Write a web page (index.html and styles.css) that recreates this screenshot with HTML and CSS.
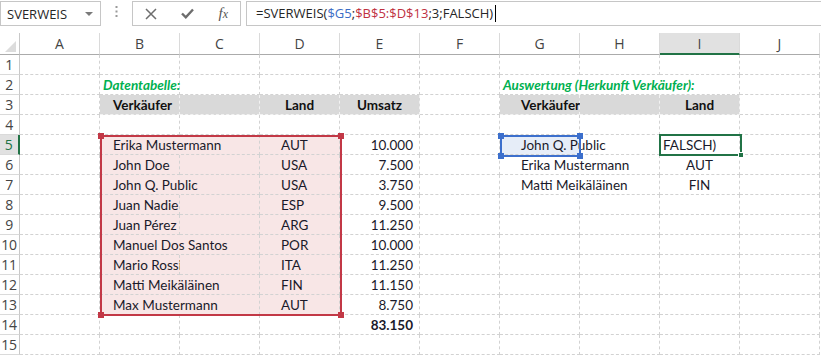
FILE: index.html
```html
<!DOCTYPE html>
<html lang="de">
<head>
<meta charset="utf-8">
<title>SVERWEIS</title>
<link rel="stylesheet" href="styles.css">
</head>
<body>
<div class="app">
  <div class="fbar">
    <div class="namebox"><span>SVERWEIS</span><span class="dd"></span></div>
    <div class="vdots"><svg width="3" height="11" viewBox="0 0 3 11"><rect x="0.5" y="0" width="2" height="2" fill="#9a9a9a"/><rect x="0.5" y="4.5" width="2" height="2" fill="#9a9a9a"/><rect x="0.5" y="9" width="2" height="2" fill="#9a9a9a"/></svg></div>
    <div class="fxbox">
      <svg class="ic" width="12" height="12" viewBox="0 0 12 12"><path d="M1 1L11 11M11 1L1 11" stroke="#6d6d6d" stroke-width="1.5" fill="none"/></svg>
      <svg class="ic" width="13" height="11" viewBox="0 0 13 11"><path d="M1 5.5L4.8 9.3L12 1.5" stroke="#6d6d6d" stroke-width="2.4" fill="none"/></svg>
      <span class="fx">f<span class="fxx">x</span></span>
    </div>
    <div class="finput">=SVERWEIS(<span class="rb">$G5</span>;<span class="rr">$B$5:$D$13</span>;3;FALSCH)<span class="caret"></span></div>
  </div>

  <div class="sheet">
    <div class="hrow">
      <div class="corner"><span class="tri"></span></div>
      <div class="ch">A</div><div class="ch">B</div><div class="ch">C</div><div class="ch">D</div><div class="ch">E</div>
      <div class="ch">F</div><div class="ch">G</div><div class="ch">H</div><div class="ch act">I</div><div class="ch">J</div>
    </div>

    <div class="r"><div class="rh">1</div><div class="c"></div><div class="c"></div><div class="c"></div><div class="c"></div><div class="c"></div><div class="c"></div><div class="c"></div><div class="c"></div><div class="c"></div><div class="c"></div></div>

    <div class="r"><div class="rh">2</div><div class="c"></div><div class="c title">Datentabelle:</div><div class="c"></div><div class="c"></div><div class="c"></div><div class="c"></div><div class="c w3 title">Auswertung (Herkunft Verkäufer):</div><div class="c"></div></div>

    <div class="r"><div class="rh">3</div><div class="c"></div><div class="c gray hd ind">Verkäufer</div><div class="c gray"></div><div class="c gray hd ctr">Land</div><div class="c gray hd ctr">Umsatz</div><div class="c"></div><div class="c gray hd ind2">Verkäufer</div><div class="c gray"></div><div class="c gray hd ctr">Land</div><div class="c"></div></div>

    <div class="r"><div class="rh">4</div><div class="c"></div><div class="c"></div><div class="c"></div><div class="c"></div><div class="c"></div><div class="c"></div><div class="c"></div><div class="c"></div><div class="c"></div><div class="c"></div></div>

    <div class="r"><div class="rh act">5</div><div class="c"></div><div class="c w2 pink ind">Erika Mustermann</div><div class="c pink ind2">AUT</div><div class="c num">10.000</div><div class="c"></div><div class="c sel ind2 nr">John Q. Public</div><div class="c"></div><div class="c edit">FALSCH)</div><div class="c"></div></div>

    <div class="r"><div class="rh">6</div><div class="c"></div><div class="c pink ind">John Doe</div><div class="c pink"></div><div class="c pink ind2">USA</div><div class="c num">7.500</div><div class="c"></div><div class="c w2 ind2">Erika Mustermann</div><div class="c ctr">AUT</div><div class="c"></div></div>

    <div class="r"><div class="rh">7</div><div class="c"></div><div class="c w2 pink ind">John Q. Public</div><div class="c pink ind2">USA</div><div class="c num">3.750</div><div class="c"></div><div class="c w2 ind2">Matti Meikäläinen</div><div class="c ctr">FIN</div><div class="c"></div></div>

    <div class="r"><div class="rh">8</div><div class="c"></div><div class="c pink ind">Juan Nadie</div><div class="c pink"></div><div class="c pink ind2">ESP</div><div class="c num">9.500</div><div class="c"></div><div class="c"></div><div class="c"></div><div class="c"></div><div class="c"></div></div>

    <div class="r"><div class="rh">9</div><div class="c"></div><div class="c pink ind">Juan Pérez</div><div class="c pink"></div><div class="c pink ind2">ARG</div><div class="c num">11.250</div><div class="c"></div><div class="c"></div><div class="c"></div><div class="c"></div><div class="c"></div></div>

    <div class="r"><div class="rh">10</div><div class="c"></div><div class="c w2 pink ind">Manuel Dos Santos</div><div class="c pink ind2">POR</div><div class="c num">10.000</div><div class="c"></div><div class="c"></div><div class="c"></div><div class="c"></div><div class="c"></div></div>

    <div class="r"><div class="rh">11</div><div class="c"></div><div class="c pink ind">Mario Rossi</div><div class="c pink"></div><div class="c pink ind2">ITA</div><div class="c num">11.250</div><div class="c"></div><div class="c"></div><div class="c"></div><div class="c"></div><div class="c"></div></div>

    <div class="r"><div class="rh">12</div><div class="c"></div><div class="c w2 pink ind">Matti Meikäläinen</div><div class="c pink ind2">FIN</div><div class="c num">11.150</div><div class="c"></div><div class="c"></div><div class="c"></div><div class="c"></div><div class="c"></div></div>

    <div class="r"><div class="rh">13</div><div class="c"></div><div class="c w2 pink ind">Max Mustermann</div><div class="c pink ind2">AUT</div><div class="c num">8.750</div><div class="c"></div><div class="c"></div><div class="c"></div><div class="c"></div><div class="c"></div></div>

    <div class="r"><div class="rh">14</div><div class="c"></div><div class="c"></div><div class="c"></div><div class="c"></div><div class="c num bold">83.150</div><div class="c"></div><div class="c"></div><div class="c"></div><div class="c"></div><div class="c"></div></div>

    <div class="r"><div class="rh">15</div><div class="c"></div><div class="c"></div><div class="c"></div><div class="c"></div><div class="c"></div><div class="c"></div><div class="c"></div><div class="c"></div><div class="c"></div><div class="c"></div></div>

    <div class="range red"><i class="h tl"></i><i class="h tr"></i><i class="h bl"></i><i class="h br"></i></div>
    <div class="range blue"><i class="h tl"></i><i class="h tr"></i><i class="h bl"></i><i class="h br"></i></div>
    <div class="active"><i class="fill"></i></div>
  </div>
</div>
</body>
</html>
```

FILE: styles.css
```css
* { box-sizing: border-box; }
html, body { margin: 0; padding: 0; background: #fff; }
body { font-family: "Lato", "Liberation Sans", sans-serif; overflow: hidden; }

.app { width: 821px; height: 356px; overflow: hidden; }

/* formula bar */
.fbar { display: flex; align-items: flex-start; height: 33px; padding-top: 1px; }
.namebox {
  width: 101px; height: 25px; flex: none;
  border: 1px solid #c6c6c6;
  display: flex; align-items: center; justify-content: space-between;
  padding: 0 7px 0 6px;
  font: 13px "Open Sans", sans-serif; color: #262626;
}
.dd { width: 0; height: 0; border-left: 4px solid transparent; border-right: 4px solid transparent; border-top: 4px solid #7a7a7a; margin-top: 1px; }
.vdots { width: 31px; height: 25px; flex: none; display: flex; align-items: center; justify-content: center; padding-bottom: 4px; }
.fxbox {
  width: 109px; height: 25px; flex: none;
  border: 1px solid #c6c6c6;
  display: flex; align-items: center; justify-content: space-between;
  padding: 0 12px 0 12px;
}
.fx { font: italic 15px "Liberation Serif", serif; color: #555; line-height: 1; }
.fxx { font-size: 12px; }
.finput {
  flex: 1; height: 25px; margin-left: 5px;
  border: 1px solid #c6c6c6; border-right: none;
  padding-left: 9px;
  font: 13px "Open Sans", sans-serif; color: #262626;
  line-height: 23px; white-space: nowrap;
  display: flex; align-items: center;
}
.rb { color: #3b6cc6; }
.rr { color: #c0313f; }
.caret { display: inline-block; width: 1px; height: 17px; background: #000; margin-left: 2px; }

/* sheet */
.sheet { position: relative; }
.hrow { display: flex; height: 22px; }
.corner { width: 20px; flex: none; position: relative; border-right: 1px solid #c8c8c8; border-bottom: 1px solid #ababab; }
.tri { position: absolute; right: 3px; bottom: 2px; width: 0; height: 0; border-left: 11px solid transparent; border-bottom: 11px solid #dcdcdc; }
.ch {
  width: 80px; flex: none;
  border-right: 1px solid #dadada; border-bottom: 1px solid #ababab;
  text-align: center; font: 14px "Open Sans", sans-serif; color: #444;
  line-height: 21px;
}
.ch.act { background: #e1e1e1; border-bottom: 2px solid #217346; }

.r { display: flex; height: 20px; }
.rh {
  width: 20px; flex: none;
  border-right: 1px solid #c8c8c8; border-bottom: 1px solid #dadada;
  text-align: center; font: 14px "Open Sans", sans-serif; color: #444;
  line-height: 19px; padding-right: 1px; letter-spacing: -0.3px;
}
.rh.act { background: #e1e1e1; color: #217346; border-right: 2px solid #217346; }

.c {
  width: 80px; flex: none;
  border-right: 1px dashed #d2d2d2; border-bottom: 1px dashed #d2d2d2;
  font-size: 13.5px; color: #1a1a2a;
  line-height: 20px; white-space: nowrap;
  padding: 0 4px;
}
.w2 { width: 160px; }
.w3 { width: 240px; }
.nr { border-right-color: transparent; }
.ind { padding-left: 13px; }
.ind2 { padding-left: 21px; }
.ctr { text-align: center; }
.num { text-align: right; padding-right: 6px; }
.bold { font-weight: 700; }
.title { color: #00b050; font-weight: 700; font-style: italic; padding-left: 3px; }
.gray { background: #d9d9d9; border-right-color: #f2f2f2; border-bottom-color: #f2f2f2; }
.hd { font-weight: 700; color: #111; }
.pink { background: #f8e6e6; }
.sel { background: #e6edf8; }
.edit { padding-left: 3px; }

/* overlays */
.range { position: absolute; border: 2px solid; }
.range.red { left: 100px; top: 102px; width: 242px; height: 181px; border-color: #c23846; }
.range.blue { left: 500px; top: 102px; width: 81px; height: 22px; border-color: #3c6fcc; }
.h { position: absolute; width: 6px; height: 6px; }
.red .h { background: #c23846; }
.blue .h { background: #3c6fcc; }
.h.tl { left: -4px; top: -4px; }
.h.tr { right: -4px; top: -4px; }
.h.bl { left: -4px; bottom: -4px; }
.h.br { right: -4px; bottom: -4px; }
.active { position: absolute; left: 659px; top: 101px; width: 83px; height: 22px; border: 2px solid #217346; }
.active .fill { position: absolute; right: -4px; bottom: -4px; width: 6px; height: 6px; background: #217346; border: 1px solid #fff; }
```
